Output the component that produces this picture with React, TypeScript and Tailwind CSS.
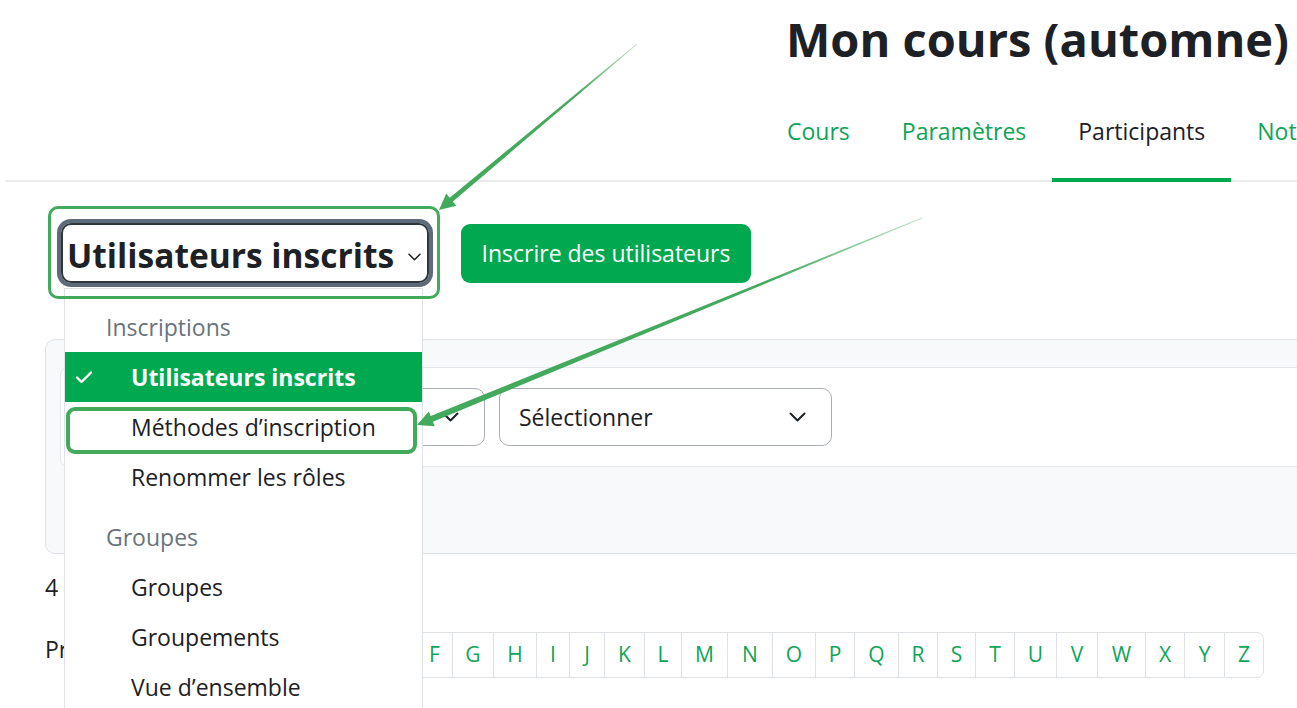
import React from "react";

const tabs = [
  { label: "Cours", active: false },
  { label: "Paramètres", active: false },
  { label: "Participants", active: true },
  { label: "Notes", active: false },
];

const letters: [string, string][] = [
  ["Tous", "w-[64px]"],
  ["A", "w-[40px]"],
  ["B", "w-[40px]"],
  ["C", "w-[40px]"],
  ["D", "w-[42px]"],
  ["E", "w-[38px]"],
  ["F", "w-[36px]"],
  ["G", "w-[41px]"],
  ["H", "w-[43px]"],
  ["I", "w-[33px]"],
  ["J", "w-[35px]"],
  ["K", "w-[40px]"],
  ["L", "w-[37px]"],
  ["M", "w-[46px]"],
  ["N", "w-[45px]"],
  ["O", "w-[43px]"],
  ["P", "w-[39px]"],
  ["Q", "w-[44px]"],
  ["R", "w-[39px]"],
  ["S", "w-[38px]"],
  ["T", "w-[39px]"],
  ["U", "w-[42px]"],
  ["V", "w-[41px]"],
  ["W", "w-[48px]"],
  ["X", "w-[39px]"],
  ["Y", "w-[40px]"],
  ["Z", "w-[40px]"],
];

function Chevron({ className = "" }: { className?: string }) {
  return (
    <svg className={className} width="17" height="10" viewBox="0 0 17 10" fill="none">
      <path d="M1.5 1.5l7 7 7-7" stroke="#1d2125" strokeWidth="2" strokeLinecap="round" strokeLinejoin="round" />
    </svg>
  );
}

export default function App() {
  return (
    <div className="relative h-[708px] w-[1297px] overflow-hidden bg-white font-['Open_Sans',sans-serif] text-[#1d2125]">
      {/* Title */}
      <h1 className="mt-[11px] whitespace-nowrap pl-[786px] text-[47px] font-bold leading-[56px] text-[#1d2125]">
        Mon cours (automne)
      </h1>

      {/* Tabs */}
      <div className="ml-[5px] flex border-b-2 border-[#ebebeb] pl-[756px]">
        {tabs.map((t) => (
          <div
            key={t.label}
            className={
              t.active
                ? "-mb-[2px] shrink-0 whitespace-nowrap border-b-4 border-[#00a94f] px-[26px] pt-[50px] pb-[33px] text-[23px] leading-[28px] text-[#1d2125]"
                : "-mb-[2px] shrink-0 whitespace-nowrap border-b-4 border-transparent px-[26px] pt-[50px] pb-[33px] text-[23px] leading-[28px] text-[#0fa457]"
            }
          >
            {t.label}
          </div>
        ))}
      </div>

      {/* Select + button */}
      <div className="mt-[41px] flex items-center pl-[61px]">
        <div className="flex h-[60px] w-[368px] items-center justify-between rounded-[10px] border-2 border-[#2f363d] pl-[4px] pr-[6px] ring-4 ring-[#5d6a79]">
          <span className="whitespace-nowrap pt-[5px] text-[33.5px] font-bold leading-none text-[#1d2125]">Utilisateurs inscrits</span>
          <svg width="13" height="8" viewBox="0 0 13 8" fill="none" className="mt-[8px]">
            <path d="M1 1.2l5.5 5.5L12 1.2" stroke="#1d2125" strokeWidth="1.5" strokeLinecap="round" strokeLinejoin="round" />
          </svg>
        </div>
        <div className="ml-[32px] flex h-[59px] w-[290px] items-center justify-center rounded-[9px] bg-[#00a94f] text-[23px] text-white">
          Inscrire des utilisateurs
        </div>
      </div>

      {/* Filter card */}
      <div className="mt-[56px] ml-[45px] mr-[-20px] rounded-[10px] border border-[#dee2e6] bg-[#f8f9fa]">
        <div className="h-[27px]" />
        <div className="ml-[14px] flex h-[100px] gap-[14px] rounded-l-[8px] border-y border-l border-[#e3e6ea] bg-white pt-[20px] pl-[14px]">
          <div className="flex h-[58px] w-[410px] items-center justify-between rounded-[10px] border border-[#a9aeb4] pl-[19px] pr-[25px] text-[23px]">
            <span>Tous</span>
            <Chevron />
          </div>
          <div className="flex h-[58px] w-[333px] items-center justify-between rounded-[10px] border border-[#a9aeb4] pl-[19px] pr-[25px] text-[23px]">
            <span>Sélectionner</span>
            <Chevron />
          </div>
        </div>
        <div className="h-[86px]" />
      </div>

      {/* Count */}
      <div className="mt-[19px] pl-[45px] text-[23px] leading-[28px]">4 participants trouvés</div>

      {/* Initials bar */}
      <div className="mt-[31px] flex pl-[45px]">
        <div className="w-[107px] shrink-0 pt-[3px] text-[23px] leading-[28px]">Prénom</div>
        <div className="flex">
          {letters.map(([l, w], i) => (
            <div
              key={l}
              className={
                w +
                (i === letters.length - 1
                  ? " flex h-[46px] shrink-0 items-center justify-center rounded-r-[7px] border border-[#dee2e6] text-[21px] text-[#0fa457]"
                  : i === 0
                  ? " flex h-[46px] shrink-0 items-center justify-center rounded-l-[7px] border-y border-l border-[#dee2e6] text-[21px] text-[#0fa457]"
                  : " flex h-[46px] shrink-0 items-center justify-center border-y border-l border-[#dee2e6] text-[21px] text-[#0fa457]")
              }
            >
              {l}
            </div>
          ))}
        </div>
      </div>

      {/* Dropdown menu */}
      <div className="absolute left-[64px] top-[288px] h-[440px] w-[359px] border border-[#dee2e6] bg-white pt-[13px] text-[23px] leading-[28px]">
        <div className="flex h-[50px] items-center pl-[41px] text-[#6a737b]">Inscriptions</div>
        <div className="flex h-[50px] items-center bg-[#00a94f] pl-[10px] text-white">
          <svg width="18" height="14" viewBox="0 0 18 14" fill="none">
            <path d="M2 7.5l4.5 4.5L16 2.5" stroke="#ffffff" strokeWidth="2.4" strokeLinecap="round" strokeLinejoin="round" />
          </svg>
          <span className="ml-[38px] font-bold">Utilisateurs inscrits</span>
        </div>
        <div className="flex h-[50px] items-center pl-[66px]">Méthodes d’inscription</div>
        <div className="flex h-[50px] items-center pl-[66px]">Renommer les rôles</div>
        <div className="mt-[10px] flex h-[50px] items-center pl-[41px] text-[#6a737b]">Groupes</div>
        <div className="flex h-[50px] items-center pl-[66px]">Groupes</div>
        <div className="flex h-[50px] items-center pl-[66px]">Groupements</div>
        <div className="flex h-[50px] items-center pl-[66px]">Vue d’ensemble</div>
      </div>

      {/* Annotation boxes */}
      <div className="absolute left-[48px] top-[206px] h-[93px] w-[392px] rounded-[10px] border-[3px] border-[#43a95d]" />
      <div className="absolute left-[66px] top-[407px] h-[47px] w-[351px] rounded-[9px] border-[4px] border-[#43a95d]" />

      {/* Arrows */}
      <svg className="pointer-events-none absolute left-0 top-0" width="1297" height="708" viewBox="0 0 1297 708">
        <defs>
          <linearGradient id="a1" gradientUnits="userSpaceOnUse" x1="637" y1="44" x2="439" y2="210">
            <stop offset="0" stopColor="#43a95d" stopOpacity="0.3" />
            <stop offset="0.3" stopColor="#43a95d" stopOpacity="1" />
          </linearGradient>
          <linearGradient id="a2" gradientUnits="userSpaceOnUse" x1="922" y1="218" x2="417" y2="425">
            <stop offset="0" stopColor="#43a95d" stopOpacity="0.3" />
            <stop offset="0.3" stopColor="#43a95d" stopOpacity="1" />
          </linearGradient>
        </defs>
        <polygon
          fill="url(#a1)"
          points="636.6,43.7 449.7,197.8 446.2,193.6 439,210 456.4,205.8 452.9,201.6 637.4,44.3"
        />
        <polygon
          fill="url(#a2)"
          points="921.8,217.6 430.7,416.1 428.8,411.5 417,425 434.8,426.3 432.9,421.7 922.2,218.4"
        />
      </svg>
    </div>
  );
}
